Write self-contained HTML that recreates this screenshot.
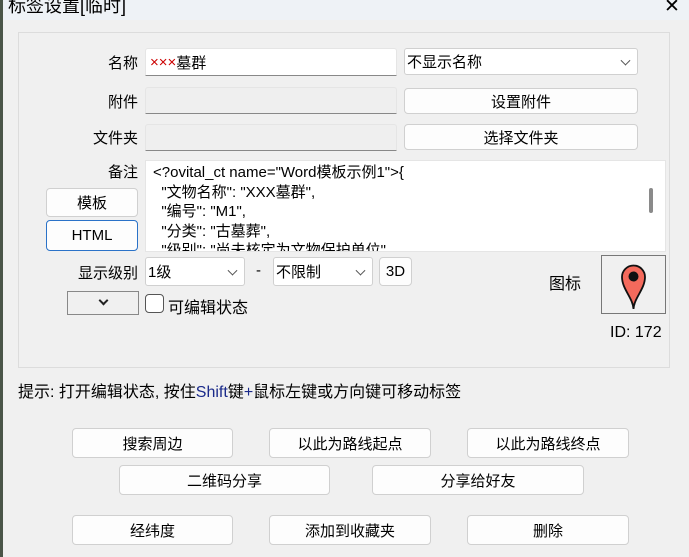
<!DOCTYPE html>
<html><head><meta charset="utf-8"><style>
*{box-sizing:border-box;margin:0;padding:0}
body{width:689px;height:557px;background:#f0f0f0;position:relative;overflow:hidden;font-family:"Liberation Sans","Noto Sans CJK SC",sans-serif;font-size:15px;color:#000}
.a{position:absolute}
.lbl{position:absolute;text-align:right;width:80px}
.btn{position:absolute;background:#fdfdfd;border:1px solid #d0d0d0;border-radius:4px;display:flex;align-items:center;justify-content:center;font-size:15px}
.inp{position:absolute;border:1px solid #e5e5e5;border-bottom:1px solid #888;background:#fff;border-radius:3px 3px 0 0;padding-left:4px;display:flex;align-items:center}
.sel{position:absolute;border:1px solid #d0d0d0;background:#fff;border-radius:3px;padding-left:2px;display:flex;align-items:center}
.chev{position:absolute;right:8px;top:50%;width:7px;height:7px;border-right:1px solid #555;border-bottom:1px solid #555;transform:translateY(-70%) rotate(45deg)}
</style></head><body>
<div class="a" style="left:0;top:0;width:689px;height:20px;background:#eef2f6"></div>
<div class="a" style="left:0;top:0;width:3px;height:557px;background:#4a5548"></div>
<div class="a" style="left:8px;top:-8px;font-size:18px">标签设置[临时]</div>
<div class="a" style="left:664px;top:-5px;font-size:19px">✕</div>
<div class="a" style="left:18px;top:32px;width:652px;height:336px;border:1px solid #dcdcdc"></div>

<div class="lbl" style="left:58px;top:52px">名称</div>
<div class="inp" style="left:145px;top:48px;width:252px;height:28px"><span style="color:#c00">×××</span>墓群</div>
<div class="sel" style="left:404px;top:48px;width:234px;height:27px">不显示名称<div class="chev"></div></div>

<div class="lbl" style="left:58px;top:91px">附件</div>
<div class="inp" style="left:145px;top:87px;width:252px;height:27px;background:#efefef"></div>
<div class="btn" style="left:404px;top:88px;width:234px;height:26px">设置附件</div>

<div class="lbl" style="left:58px;top:127px">文件夹</div>
<div class="inp" style="left:145px;top:124px;width:252px;height:27px;background:#efefef"></div>
<div class="btn" style="left:404px;top:124px;width:234px;height:26px">选择文件夹</div>

<div class="lbl" style="left:58px;top:161px">备注</div>
<div class="a" style="left:145px;top:160px;width:521px;height:92px;background:#fff;border:1px solid #e5e5e5;overflow:hidden;padding:2px 0 0 7px;font-size:15px;line-height:19.5px;white-space:pre">&lt;?ovital_ct name="Word模板示例1"&gt;{
  "文物名称": "XXX墓群",
  "编号": "M1",
  "分类": "古墓葬",
  "级别": "尚未核定为文物保护单位"</div>
<div class="a" style="left:649px;top:188px;width:4px;height:25px;background:#8a8a8a;border-radius:2px"></div>
<div class="btn" style="left:46px;top:188px;width:92px;height:29px">模板</div>
<div class="btn" style="left:46px;top:220px;width:92px;height:31px;border-color:#2a72c8">HTML</div>

<div class="lbl" style="left:58px;top:262px">显示级别</div>
<div class="sel" style="left:145px;top:257px;width:100px;height:29px">1级<div class="chev"></div></div>
<div class="a" style="left:256px;top:262px">-</div>
<div class="sel" style="left:273px;top:257px;width:100px;height:29px">不限制<div class="chev"></div></div>
<div class="btn" style="left:379px;top:257px;width:33px;height:29px">3D</div>

<div class="a" style="left:549px;top:270px;font-size:16px">图标</div>
<div class="a" style="left:601px;top:255px;width:65px;height:59px;border:1px solid #777;background:#f0f0f0">
<svg width="63" height="57" viewBox="0 0 63 57"><path d="M31.5 53 C31 42 20 33 20 21 A11.5 11.5 0 0 1 43 21 C43 33 32 42 31.5 53Z" fill="#f46a5c" stroke="#111" stroke-width="1.8"/><circle cx="31.5" cy="20.5" r="5" fill="#111"/></svg></div>

<div class="a" style="left:67px;top:291px;width:72px;height:24px;border:1px solid #888;background:#f0f0f0"><div style="position:absolute;left:32px;top:5px;width:7px;height:7px;border-right:2px solid #222;border-bottom:2px solid #222;transform:rotate(45deg)"></div></div>
<div class="a" style="left:145px;top:294px;width:19px;height:19px;border:1px solid #555;border-radius:4px;background:#fff"></div>
<div class="a" style="left:168px;top:294px;font-size:16px">可编辑状态</div>
<div class="a" style="left:610px;top:324px;font-size:16px">ID: 172</div>

<div class="a" style="left:18px;top:378px;font-size:16px">提示: 打开编辑状态, 按住<span style="color:#1a2a8a">Shift</span>键<span style="color:#1a2a8a">+</span>鼠标左键或方向键可移动标签</div>

<div class="btn" style="left:72px;top:428px;width:161px;height:30px">搜索周边</div>
<div class="btn" style="left:269px;top:428px;width:162px;height:30px">以此为路线起点</div>
<div class="btn" style="left:467px;top:428px;width:162px;height:30px">以此为路线终点</div>
<div class="btn" style="left:119px;top:465px;width:211px;height:30px">二维码分享</div>
<div class="btn" style="left:372px;top:465px;width:212px;height:30px">分享给好友</div>
<div class="btn" style="left:72px;top:515px;width:161px;height:30px">经纬度</div>
<div class="btn" style="left:269px;top:515px;width:162px;height:30px">添加到收藏夹</div>
<div class="btn" style="left:467px;top:515px;width:162px;height:30px">删除</div>
</body></html>
